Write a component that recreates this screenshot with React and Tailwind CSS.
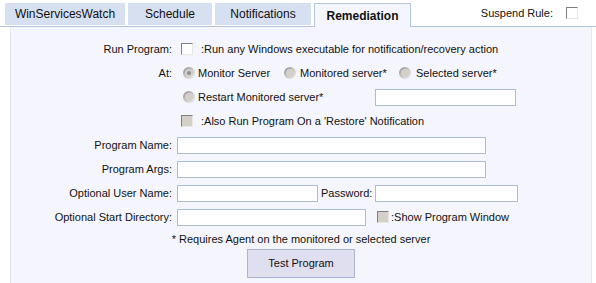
import React from 'react';

const font = { fontFamily: '"Liberation Sans", Arial, sans-serif' };

function Check({ disabled }) {
  return (
    <span
      className={`inline-block w-[12px] h-[12px] border-t-[#7f7f7f] border-l-[#7f7f7f] border-b-[#e6e6e6] border-r-[#e6e6e6] border ${
        disabled ? 'bg-[#d4d0c8]' : 'bg-white'
      }`}
    />
  );
}

function Radio({ checked }) {
  return (
    <span className="relative inline-block w-[12px] h-[12px] rounded-full bg-gradient-to-br from-[#8a8a8a] via-[#c8c8c8] to-[#f0f0f0]">
      <span className="absolute left-[2px] top-[2px] w-[8px] h-[8px] rounded-full bg-[#d4d0c8]" />
      {checked && <span className="absolute left-[4px] top-[4px] w-[4px] h-[4px] rounded-full bg-[#8c8c8c]" />}
    </span>
  );
}

function Input({ w }) {
  return <span className={`inline-block h-[17px] bg-white border border-[#a9bcd9] ${w}`} />;
}

function Row({ label, children }) {
  return (
    <div className="flex items-center h-[24px]">
      <div className="w-[166px] pr-[5px] text-right">{label}</div>
      <div className="flex items-center">{children}</div>
    </div>
  );
}

const tabs = [
  { name: 'WinServicesWatch', w: 'w-[120px]' },
  { name: 'Schedule', w: 'w-[84px]' },
  { name: 'Notifications', w: 'w-[96px]' },
];

export default function App() {
  return (
    <div className="w-[596px] h-[283px] bg-white text-[11px] text-[#111] overflow-hidden" style={font}>
      {/* tab strip */}
      <div className="flex items-end h-[27px] pl-[5px] border-b border-[#b4c3de]">
        {tabs.map((t) => (
          <div
            key={t.name}
            className={`${t.w} h-[22px] mr-[3px] mb-[1px] flex items-center justify-center bg-[#d7e0f1] text-[12px]`}
          >
            {t.name}
          </div>
        ))}
        <div className="w-[97px] h-[24px] -mb-[1px] flex items-center justify-center bg-[#f5f6fd] border border-b-0 border-[#b4c3de] text-[12px] font-bold">
          Remediation
        </div>
        <div className="flex items-center ml-auto mr-[18px] mb-[5px]">
          <span className="mr-[13px]">Suspend Rule:</span>
          <Check />
        </div>
      </div>

      {/* body */}
      <div className="ml-[10px] mr-[4px] h-[256px] bg-[#f5f6fd] border-l border-r border-[#e3e7f2] pt-[10px]">
        <Row label="Run Program:">
          <span className="ml-[4px] flex"><Check /></span>
          <span className="ml-[8px]">:Run any Windows executable for notification/recovery action</span>
        </Row>
        <Row label="At:">
          <span className="ml-[6px] flex"><Radio checked /></span>
          <span className="ml-[3px] w-[86px]">Monitor Server</span>
          <Radio />
          <span className="ml-[4px] w-[99px]">Monitored server*</span>
          <Radio />
          <span className="ml-[5px]">Selected server*</span>
        </Row>
        <Row label="">
          <span className="ml-[6px] flex"><Radio /></span>
          <span className="ml-[3px] w-[177px]">Restart Monitored server*</span>
          <Input w="w-[141px]" />
        </Row>
        <Row label="">
          <span className="ml-[4px] flex"><Check disabled /></span>
          <span className="ml-[8px]">:Also Run Program On a 'Restore' Notification</span>
        </Row>
        <Row label="Program Name:">
          <Input w="w-[309px]" />
        </Row>
        <Row label="Program Args:">
          <Input w="w-[309px]" />
        </Row>
        <Row label="Optional User Name:">
          <Input w="w-[141px]" />
          <span className="ml-[3px] mr-[3px]">Password:</span>
          <Input w="w-[143px]" />
        </Row>
        <Row label="Optional Start Directory:">
          <Input w="w-[189px]" />
          <span className="ml-[11px] flex"><Check disabled /></span>
          <span className="ml-[2px]">:Show Program Window</span>
        </Row>
        <div className="h-[20px] flex items-center justify-center">* Requires Agent on the monitored or selected server</div>
        <div className="flex justify-center">
          <div className="w-[108px] h-[29px] flex items-center justify-center bg-[#dfdff0] border border-[#a9b5d0]">
            Test Program
          </div>
        </div>
      </div>
    </div>
  );
}
